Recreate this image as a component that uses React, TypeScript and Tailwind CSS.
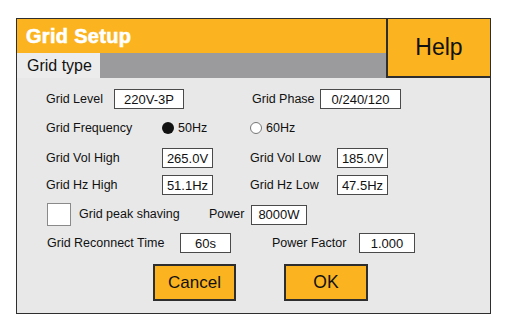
import React from 'react';

const font = { fontFamily: '"Liberation Sans", Arial, sans-serif' };

function Field({ value, w }: { value: string; w: string }) {
  return (
    <div className={`${w} h-[20px] bg-white border border-[#4a4a4a] flex items-center justify-center text-[13px] text-[#111] leading-none`}>
      {value}
    </div>
  );
}

export default function App() {
  return (
    <div className="w-[508px] h-[327px] bg-white pt-[18px] pl-[16px]" style={font}>
      <div className="w-[475px] h-[296px] border-[1.5px] border-[#2e2e2e] flex flex-col bg-[#e8e8e8]">
        {/* Header */}
        <div className="flex h-[59px]">
          <div className="flex-1 flex flex-col">
            <div className="h-[34px] bg-[#fbb41f] flex items-center pl-[9px]">
              <span className="text-white font-bold text-[20px] leading-none tracking-[0.3px] [-webkit-text-stroke:0.6px_white]">Grid Setup</span>
            </div>
            <div className="flex-1 flex bg-[#9b9b9d]">
              <div className="w-[83px] bg-[#ececec] flex items-center pl-[10px] text-[16px] text-[#111]">
                Grid type
              </div>
            </div>
          </div>
          <div className="w-[104px] bg-[#fbb41f] border-[2px] border-[#2e2e2e] border-t-0 border-r-0 flex items-center justify-center text-[23px] text-[#111]">
            Help
          </div>
        </div>

        {/* Body */}
        <div className="flex flex-col pl-[29px] text-[12.5px] text-[#111]">
          <div className="flex items-center h-[20px] mt-[11px]">
            <span className="w-[68px]">Grid Level</span>
            <Field value="220V-3P" w="w-[70px]" />
            <span className="w-[68px] ml-[68px]">Grid Phase</span>
            <Field value="0/240/120" w="w-[81px]" />
          </div>

          <div className="flex items-center h-[20px] mt-[9px]">
            <span className="w-[116px]">Grid Frequency</span>
            <span className="w-[12px] h-[12px] rounded-full bg-[#111]" />
            <span className="ml-[4px] w-[72px]">50Hz</span>
            <span className="w-[12px] h-[12px] rounded-full bg-white border border-[#777]" />
            <span className="ml-[4px]">60Hz</span>
          </div>

          <div className="flex items-center h-[20px] mt-[10px]">
            <span className="w-[116px]">Grid Vol High</span>
            <Field value="265.0V" w="w-[51px]" />
            <span className="w-[87px] ml-[37px]">Grid Vol Low</span>
            <Field value="185.0V" w="w-[51px]" />
          </div>

          <div className="flex items-center h-[20px] mt-[7px]">
            <span className="w-[116px]">Grid Hz High</span>
            <Field value="51.1Hz" w="w-[51px]" />
            <span className="w-[87px] ml-[37px]">Grid Hz Low</span>
            <Field value="47.5Hz" w="w-[51px]" />
          </div>

          <div className="flex items-center h-[23px] mt-[8px]">
            <span className="w-[24px] h-[23px] ml-[1px] bg-white border border-[#8a8a8a]" />
            <span className="w-[130px] ml-[8px]">Grid peak shaving</span>
            <span className="w-[42px]">Power</span>
            <Field value="8000W" w="w-[56px]" />
          </div>

          <div className="flex items-center h-[20px] mt-[7px]">
            <span className="w-[133px] ml-[1px]">Grid Reconnect Time</span>
            <Field value="60s" w="w-[51px]" />
            <span className="w-[87px] ml-[41px]">Power Factor</span>
            <Field value="1.000" w="w-[56px]" />
          </div>

          <div className="flex h-[37px] mt-[11px] ml-[107px] gap-[48px]">
            <button className="w-[83px] h-[37px] bg-[#fbb41f] border-[2px] border-[#2e2e2e] text-[17px] text-[#111]">
              Cancel
            </button>
            <button className="w-[84px] h-[37px] bg-[#fbb41f] border-[2px] border-[#2e2e2e] text-[17.5px] text-[#111]">
              OK
            </button>
          </div>
        </div>
      </div>
    </div>
  );
}
